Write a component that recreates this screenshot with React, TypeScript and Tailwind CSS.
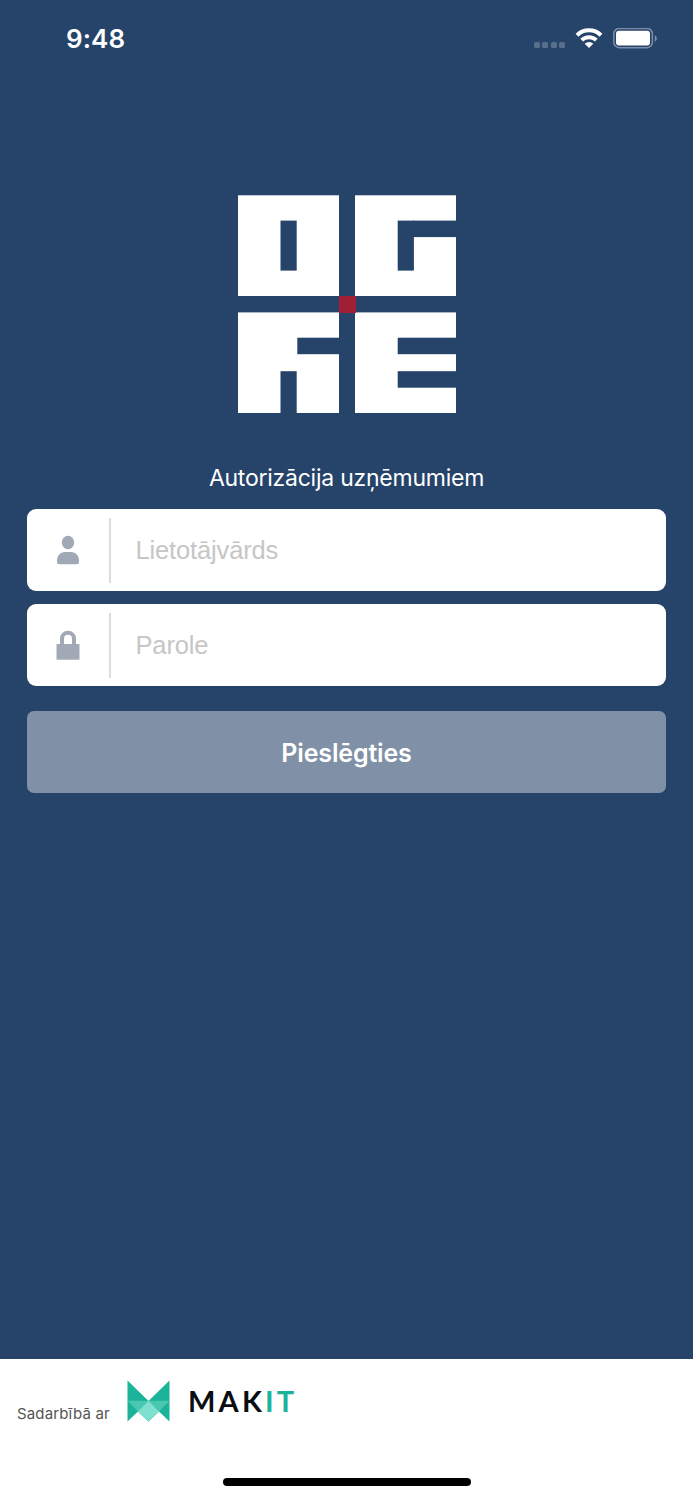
import React, { useState } from 'react';

const StatusBar: React.FC = () => (
  <div className="flex h-[76px] w-full items-center justify-between pl-[66px] pr-9">
    <span className="mt-px font-['Inter',sans-serif] text-[26px] font-semibold leading-none tracking-[0.1px] text-white">9:48</span>
    <div className="flex items-center">
      <div className="mr-2.5 mt-3.5 flex gap-[2.5px]">
        <span className="h-1.5 w-1.5 rounded-[1.5px] bg-[#586f8c]" />
        <span className="h-1.5 w-1.5 rounded-[1.5px] bg-[#586f8c]" />
        <span className="h-1.5 w-1.5 rounded-[1.5px] bg-[#586f8c]" />
        <span className="h-1.5 w-1.5 rounded-[1.5px] bg-[#586f8c]" />
      </div>
      <svg width="28" height="20" viewBox="0 0 28 20" className="mr-2.5" fill="none" stroke="#fff">
        <path d="M2 7.2a17.2 17.2 0 0 1 24 0" strokeWidth="4" />
        <path d="M6.700 12.200a10.400 10.400 0 0 1 14.600 0" strokeWidth="3.900" />
        <path d="M14 20l-4.300-4.300a6.100 6.100 0 0 1 8.600 0z" fill="#fff" stroke="none" />
      </svg>
      <svg width="44" height="21" viewBox="0 0 44 21">
        <rect x="0.8" y="0.5" width="38.6" height="19.2" rx="5.5" fill="none" stroke="#7d8fa7" strokeWidth="1.5" />
        <rect x="3" y="2.700" width="34" height="14.700" rx="3" fill="#fff" />
        <path d="M41.8 7.2c2.6 1.2 2.6 5.2 0 6.4z" fill="#7d8fa7" />
      </svg>
    </div>
  </div>
);

const OgreLogo: React.FC = () => (
  <svg width="218" height="218" viewBox="0 0 218 218" className="shrink-0">
    <g fill="#fff">
      <rect x="0" y="0.300" width="101" height="100.700" />
      <rect x="117" y="0.300" width="101" height="100.700" />
      <rect x="0" y="117.400" width="101" height="100.600" />
      <rect x="117" y="117.400" width="101" height="100.600" />
    </g>
    {/* counters cut out of the four blocks */}
    <g fill="#264369">
      <rect x="42.500" y="25.600" width="16.200" height="50" />
      <rect x="159.700" y="25.600" width="16.200" height="50" />
      <rect x="175" y="25.600" width="44" height="16.500" />
      <rect x="59.300" y="142.700" width="42.500" height="16.500" />
      <rect x="42.500" y="176.200" width="16.200" height="42.500" />
      <rect x="159.700" y="142.700" width="59" height="16.500" />
      <rect x="159.700" y="176.200" width="59" height="16.500" />
    </g>
    <rect x="101" y="101" width="17" height="17" fill="#a11f34" />
  </svg>
);

const UserIcon: React.FC = () => (
  <svg width="24" height="30" viewBox="0 0 24 30" fill="#a2a9b6">
    <ellipse cx="12" cy="7.5" rx="6.2" ry="6.8" />
    <path d="M1 25.500C1 20 5 17 9 17h6c4 0 8 3 8 8.500v1.500a2.200 2.200 0 0 1-2.200 2.200H3.200A2.200 2.200 0 0 1 1 27z" />
  </svg>
);

const LockIcon: React.FC = () => (
  <svg width="24" height="30" viewBox="0 0 24 30">
    <path d="M6 14.200V8.700a6 6 0 0 1 12 0v5.500" fill="none" stroke="#a2a9b6" strokeWidth="4" />
    <rect x="0.500" y="14" width="23" height="15.700" fill="#a2a9b6" />
  </svg>
);

interface FieldProps {
  icon: React.ReactNode;
  placeholder: string;
  type: string;
  value: string;
  onChange: (value: string) => void;
}

const Field: React.FC<FieldProps> = ({ icon, placeholder, type, value, onChange }) => (
  <label className="flex h-[82px] w-full items-center rounded-[9px] bg-white">
    <span className="flex w-[82px] shrink-0 justify-center">{icon}</span>
    <span className="h-[65px] w-[1.5px] shrink-0 bg-[#dcdcdc]" />
    <input
      type={type}
      value={value}
      placeholder={placeholder}
      onChange={(e) => onChange(e.target.value)}
      className="ml-[25px] h-full min-w-0 flex-1 bg-transparent font-['Liberation_Sans',sans-serif] text-[25.500px] tracking-[-0.150px] text-gray-800 outline-none placeholder:text-[#c6c6c6]"
    />
  </label>
);

const MakitMark: React.FC = () => (
  <svg width="43" height="42" viewBox="0 0 43 42" className="shrink-0">
    <path d="M0.500 0.500L21.500 21 42.500 0.500V41.500L32 31.500 21.500 41.500 11 31.500 0.500 41.500z" fill="#1bb399" />
    <path d="M0.500 20.800H42.500L32 31.500 21.500 41.500 11 31.500z" fill="#49c7b0" />
    <path d="M21.500 21L32 31.500 21.500 41.500 11 31.500z" fill="#7fe0cf" />
  </svg>
);

const App: React.FC = () => {
  const [username, setUsername] = useState('');
  const [password, setPassword] = useState('');

  return (
    <div className="flex h-[1500px] w-[693px] flex-col overflow-hidden bg-[#264369] font-['Inter',sans-serif]">
      <StatusBar />

      <main className="flex flex-1 flex-col items-center px-[27px] pt-[119px]">
        <div className="pl-px">
          <OgreLogo />
        </div>
        <h1 className="mt-[49px] text-[23px] font-normal leading-8 tracking-[-0.240px] text-white">
          Autorizācija uzņēmumiem
        </h1>
        <form className="mt-[15px] flex w-full flex-col" onSubmit={(e) => e.preventDefault()}>
          <div className="flex flex-col gap-[13.300px]">
            <Field icon={<UserIcon />} placeholder="Lietotājvārds" type="text" value={username} onChange={setUsername} />
            <Field icon={<LockIcon />} placeholder="Parole" type="password" value={password} onChange={setPassword} />
          </div>
          <button
            type="submit"
            className="mt-[25px] h-[82px] w-full rounded-[7px] bg-[#8090a7] pt-0.5 text-[25px] font-semibold tracking-[-0.150px] text-white"
          >
            Pieslēgties
          </button>
        </form>
      </main>

      <footer className="flex h-[141px] flex-col items-center justify-between bg-white pb-3.5 pt-[21px]">
        <div className="flex w-full items-start pl-[17px]">
          <span className="mt-6 w-[110px] text-[15px] leading-5 tracking-[0.150px] text-[#555]">Sadarbībā ar</span>
          <MakitMark />
          <span className="ml-[18px] mt-1 font-['Lato',sans-serif] text-[29px] font-bold leading-[34px] tracking-[3.200px] text-[#0b0d14]">
            MAK<span className="text-[#1bb399]">IT</span>
          </span>
        </div>
        <div className="h-2 w-[248px] rounded-full bg-black" />
      </footer>
    </div>
  );
};

export default App;
